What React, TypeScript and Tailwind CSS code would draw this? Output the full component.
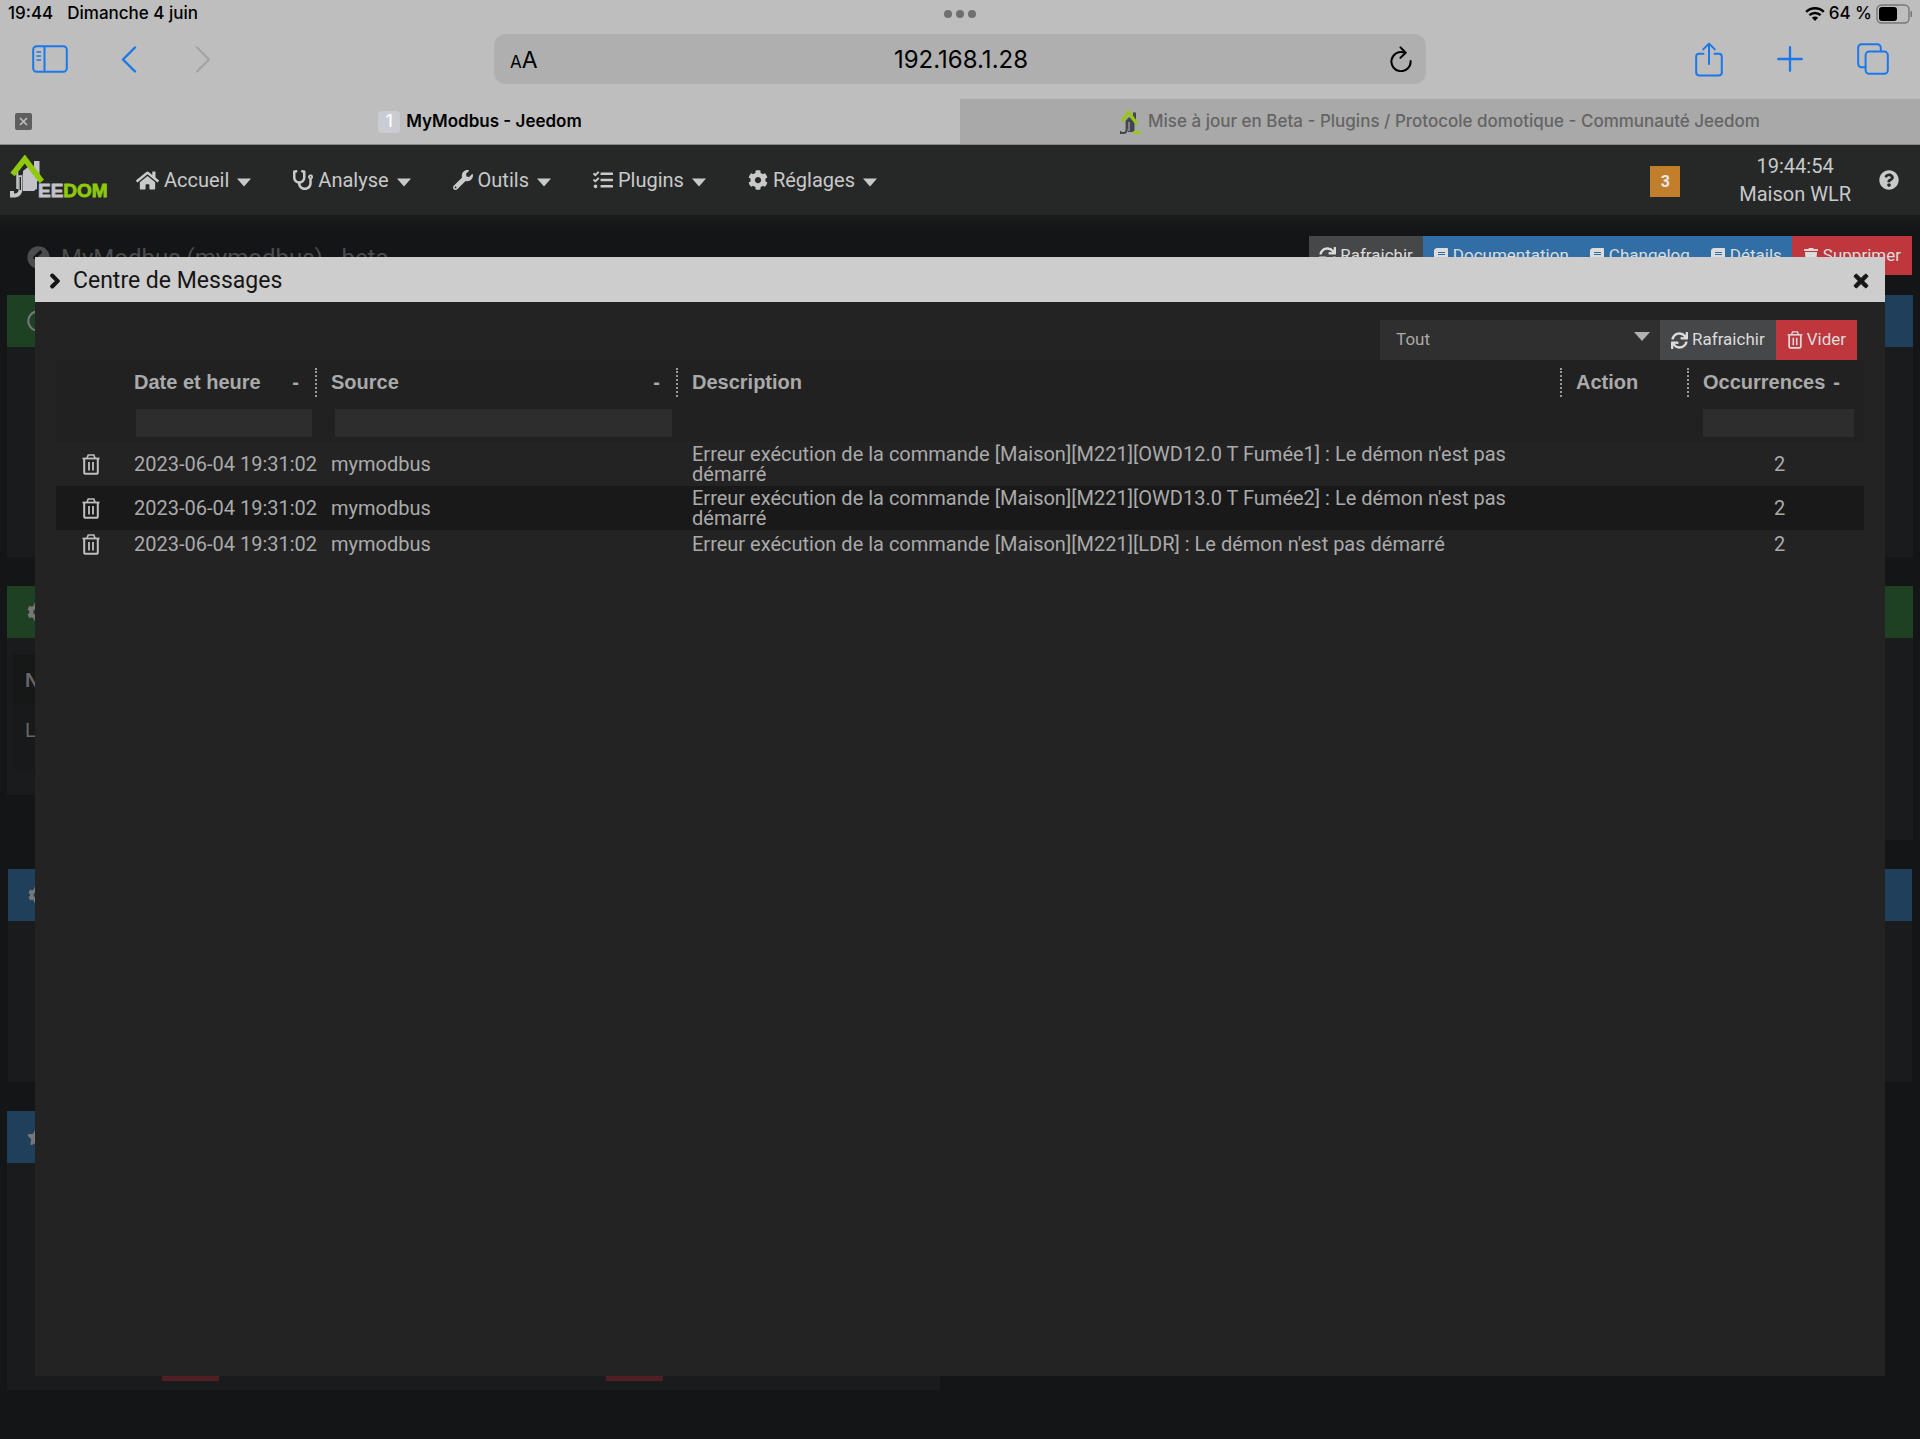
import type { ReactNode } from "react";
import {
  FaBook,
  FaChevronCircleLeft,
  FaChevronRight,
  FaCog,
  FaHome,
  FaQuestionCircle,
  FaRegCircle,
  FaStar,
  FaStethoscope,
  FaSync,
  FaTasks,
  FaTimes,
  FaTrash,
  FaWrench,
} from "react-icons/fa";

const roboto = "font-[Roboto,sans-serif]";
const inter = "font-[Inter,sans-serif]";

function Caret() {
  return (
    <svg width="14" height="9" viewBox="0 0 14 9" aria-hidden="true" className="mt-1">
      <path d="M0 0.5h14L7 8.5z" fill="currentColor" />
    </svg>
  );
}

function TrashOutline({ className }: { className: string }) {
  return (
    <svg viewBox="0 0 18 21" className={className} fill="none" stroke="currentColor" aria-hidden="true">
      <path d="M0.5 4.5h17" strokeWidth="1.8" />
      <path d="M5 4.2L6.2 1h5.6L13 4.2" strokeWidth="1.6" />
      <path d="M2.2 5v13.2a1.6 1.6 0 0 0 1.6 1.6h10.4a1.6 1.6 0 0 0 1.6-1.6V5" strokeWidth="2" />
      <path d="M7 8v8.5M11 8v8.5" strokeWidth="1.8" />
    </svg>
  );
}

function StatusBar() {
  return (
    <div className={`grid h-7 grid-cols-3 items-center text-[17px] font-medium text-black ${inter}`}>
      <div className="flex gap-3.5 pl-2">
        <span>19:44</span>
        <span>Dimanche 4 juin</span>
      </div>
      <div className="flex justify-center gap-1">
        <span className="size-2 rounded-full bg-[#6f6f6f]" />
        <span className="size-2 rounded-full bg-[#6f6f6f]" />
        <span className="size-2 rounded-full bg-[#6f6f6f]" />
      </div>
      <div className="flex items-center justify-end gap-1 pr-2">
        <svg width="20" height="14" viewBox="0 0 20 14" fill="none" stroke="black" aria-hidden="true">
          <path d="M1.2 4.9a12.6 12.6 0 0 1 17.6 0" strokeWidth="2.5" />
          <path d="M4.4 8.2a8 8 0 0 1 11.2 0" strokeWidth="2.5" />
          <path d="M10 14L6.9 10.8a4.4 4.4 0 0 1 6.2 0z" fill="black" stroke="none" />
        </svg>
        <span>64 %</span>
        <svg width="36" height="20" viewBox="0 0 36 20" aria-hidden="true">
          <rect x="1" y="1" width="32" height="18" rx="4.5" fill="none" stroke="#777" strokeWidth="1.4" />
          <rect x="3" y="3" width="18" height="14" rx="3" fill="black" />
          <path d="M34.5 7v6a3 3 0 0 0 0-6z" fill="#777" />
        </svg>
      </div>
    </div>
  );
}

function BrowserBar() {
  return (
    <div className="flex h-[71px] items-start px-7 pt-1.5">
      <div className="flex h-[50px] flex-1 items-center text-[#1a78ea]">
        <button type="button" aria-label="Barre latérale" className="ml-1">
          <svg width="36" height="28" viewBox="0 0 36 28" fill="none" stroke="currentColor" strokeWidth="2">
            <rect x="1.2" y="1.2" width="33.6" height="25.6" rx="3.5" />
            <path d="M12.5 1v26" />
            <path d="M4.5 7h4.5M4.5 11h4.5M4.5 15h4.5" strokeWidth="1.6" />
          </svg>
        </button>
        <button type="button" aria-label="Précédent" className="ml-[53px]">
          <svg width="16" height="27" viewBox="0 0 16 27" fill="none" stroke="currentColor" strokeWidth="2.4" strokeLinecap="round" strokeLinejoin="round">
            <path d="M14 1.5L2 13.5l12 12" />
          </svg>
        </button>
        <button type="button" aria-label="Suivant" className="ml-[58px] text-[#a3a3a3]">
          <svg width="16" height="27" viewBox="0 0 16 27" fill="none" stroke="currentColor" strokeWidth="2.2" strokeLinecap="round" strokeLinejoin="round">
            <path d="M2 1.5l12 12-12 12" />
          </svg>
        </button>
      </div>
      <div className={`grid h-[50px] w-1/2 grid-cols-3 items-center rounded-xl bg-[#afafaf] pr-3.5 pl-4 text-2xl text-black ${inter}`}>
        <button type="button" aria-label="Mise en forme" className="justify-self-start pt-0.5 text-[23px]">
          <span className="text-[17px]">A</span>A
        </button>
        <span className="pt-0.5 text-center">192.168.1.28</span>
        <button type="button" aria-label="Recharger" className="justify-self-end">
          <svg width="22" height="26" viewBox="0 0 22 26" fill="none" stroke="black" strokeWidth="2" strokeLinecap="round" strokeLinejoin="round">
            <path d="M14.4 6.6A9.6 9.6 0 1 0 20.6 15" />
            <path d="M10.5 1.4l5.2 5.4-5.2 5" />
          </svg>
        </button>
      </div>
      <div className="flex h-[50px] flex-1 items-center justify-end text-[#1a78ea]">
        <button type="button" aria-label="Partager">
          <svg width="28" height="35" viewBox="0 0 28 35" fill="none" stroke="currentColor" strokeWidth="2" strokeLinecap="round" strokeLinejoin="round">
            <path d="M8.5 11.8H4a2.8 2.8 0 0 0-2.8 2.8v16A2.8 2.8 0 0 0 4 33.4h20a2.8 2.8 0 0 0 2.8-2.8v-16a2.8 2.8 0 0 0-2.8-2.8h-4.5" />
            <path d="M14 22V1.8M8.2 7.4L14 1.6l5.800 5.800" />
          </svg>
        </button>
        <button type="button" aria-label="Nouvel onglet" className="ml-[54px]">
          <svg width="26" height="26" viewBox="0 0 26 26" fill="none" stroke="currentColor" strokeWidth="2.3" strokeLinecap="round">
            <path d="M13 1.2v23.6M1.2 13h23.6" />
          </svg>
        </button>
        <button type="button" aria-label="Onglets" className="ml-[54px] mr-[3px]">
          <svg width="32" height="32" viewBox="0 0 32 32" fill="none" stroke="currentColor" strokeWidth="2">
            <rect x="8.6" y="8.6" width="22.2" height="22.2" rx="3.5" />
            <path d="M8 24.200H4.600a3.400 3.400 0 0 1-3.400-3.400V4.600a3.400 3.400 0 0 1 3.400-3.400h15.800a3.400 3.400 0 0 1 3.400 3.400V8" />
          </svg>
        </button>
      </div>
    </div>
  );
}

function JeedomMark() {
  return (
    <svg width="22" height="26" viewBox="0 0 22 26" aria-hidden="true">
      <path d="M13 3.500h3v8h-3z" fill="#44464f" />
      <path d="M5.500 12l3.500-4 5.500 5v10H8z" fill="#44464f" />
      <path d="M6.500 13v8a3 3 0 0 1-3 3H0.500v-2" fill="none" stroke="#44464f" strokeWidth="1.800" />
      <path d="M9 13v9" stroke="#a9a9a9" strokeWidth="1.200" />
      <path d="M2 12.500L8.500 3l8.500 12" fill="none" stroke="#9ac51b" strokeWidth="3.200" />
      <path d="M13 23.500h8" stroke="#9ac51b" strokeWidth="3" />
    </svg>
  );
}

function BrowserTabs() {
  return (
    <div className={`grid h-[46px] grid-cols-2 border-b border-[#8a8a8a] text-[17px] ${inter}`}>
      <div className="flex items-center pl-[15px] font-semibold text-black">
        <button type="button" aria-label="Fermer l'onglet" className="flex size-[17px] items-center justify-center rounded-xs bg-[#5e5e5e] text-[#bebebe]">
          <svg width="9" height="9" viewBox="0 0 9 9" stroke="currentColor" strokeWidth="1.6" aria-hidden="true">
            <path d="M1 1l7 7M8 1L1 8" />
          </svg>
        </button>
        <div className="flex flex-1 items-center justify-center gap-1.5 pr-8">
          <span className="flex size-[22px] items-center justify-center rounded-sm bg-[#cbcbd3] font-medium text-white">1</span>
          <span>MyModbus - Jeedom</span>
        </div>
      </div>
      <div className="flex items-center justify-center gap-1.5 bg-[#a9a9a9] font-medium text-[#646464]">
        <JeedomMark />
        <span>Mise à jour en Beta - Plugins / Protocole domotique - Communauté Jeedom</span>
      </div>
    </div>
  );
}

function Logo() {
  return (
    <svg width="100" height="50" viewBox="0 0 100 50" role="img" aria-label="Jeedom">
      <path d="M25 6h5.500v20H25z" fill="#c3c3c8" />
      <path d="M14 16l5-4 6 8 3 2v12a5 5 0 0 0-3 2H14z" fill="#c3c3c8" />
      <path d="M8.500 17v17" stroke="#c3c3c8" strokeWidth="2.500" />
      <path d="M11.500 19v15.500a6 6 0 0 1-5.500 6H3V36" fill="none" stroke="#c3c3c8" strokeWidth="4" />
      <path d="M10 17h2.500v2.500H10zM11.300 22v13" stroke="#262828" strokeWidth="1.400" fill="#262828" />
      <path d="M3.500 19.500L15.800 4l17 22.500" fill="none" stroke="#8fc90c" strokeWidth="5.500" />
      <text x="29" y="42" fontFamily="Liberation Sans, sans-serif" fontWeight="bold" fontSize="19" fill="#c3c3c8" stroke="#c3c3c8" strokeWidth="0.8">
        EE
        <tspan fill="#8fc90c" stroke="#8fc90c">DOM</tspan>
      </text>
    </svg>
  );
}

function NavItem({ icon, label }: { icon: ReactNode; label: string }) {
  return (
    <button type="button" className="flex items-center">
      <span className="mr-[5px] text-xl">{icon}</span>
      <span className="mr-2">{label}</span>
      <Caret />
    </button>
  );
}

function NavBar() {
  return (
    <header className={`flex h-[70px] items-center bg-[#262828] pr-[21px] pl-[9px] text-xl text-[#c9c9c9] ${roboto}`}>
      <a href="#accueil">
        <Logo />
      </a>
      <nav className="ml-[27px] flex flex-1 items-center gap-[42px]">
        <NavItem icon={<FaHome className="size-[23px]" />} label="Accueil" />
        <NavItem icon={<FaStethoscope />} label="Analyse" />
        <NavItem icon={<FaWrench />} label="Outils" />
        <NavItem icon={<FaTasks />} label="Plugins" />
        <NavItem icon={<FaCog />} label="Réglages" />
      </nav>
      <button type="button" className="mt-0.5 flex h-[31px] w-[30px] items-center justify-center bg-[#c27f2b] pt-0.5 text-base font-bold text-[#e8e8e8]">
        3
      </button>
      <div className="ml-[59px] text-center leading-7">
        <div>19:44:54</div>
        <div>Maison WLR</div>
      </div>
      <button type="button" aria-label="Aide" className="ml-7">
        <FaQuestionCircle className="size-5" />
      </button>
    </header>
  );
}

function ActionButton({ icon, label, className }: { icon: ReactNode; label: string; className: string }) {
  return (
    <button type="button" className={`flex items-center justify-center gap-1 text-[17px] text-[#dcdcdc] ${className}`}>
      {icon}
      {label}
    </button>
  );
}

function Panel({ header, icon, className, children }: { header: string; icon?: ReactNode; className: string; children?: ReactNode }) {
  return (
    <section className={`flex flex-col bg-[#1a1b1c] ${className}`}>
      <div className={`flex h-[52px] shrink-0 items-center pl-5 text-[#777] ${header}`}>{icon}</div>
      {children}
    </section>
  );
}

function PluginPage() {
  return (
    <div className="px-[7px] pb-[49px]">
      <div className="flex justify-between pt-[21px] pr-px">
        <h1 className="flex items-center gap-[11px] pt-1 pl-5 text-2xl leading-none text-[#4b4c4d]">
          <FaChevronCircleLeft className="size-[23px]" />
          MyModbus (mymodbus) - beta
        </h1>
        <div className="flex h-[39px]">
          <ActionButton className="bg-[#464749] px-2.5" icon={<FaSync className="size-[17px]" />} label="Rafraichir" />
          <ActionButton className="bg-[#306ea5] px-2.5" icon={<FaBook className="size-4" />} label="Documentation" />
          <ActionButton className="bg-[#306ea5] px-2.5" icon={<FaBook className="size-4" />} label="Changelog" />
          <ActionButton className="bg-[#306ea5] px-2.5" icon={<FaBook className="size-4" />} label="Détails" />
          <ActionButton className="bg-[#be373c] px-[11px]" icon={<FaTrash className="size-4" />} label="Supprimer" />
        </div>
      </div>
      <div className="mt-5 grid grid-cols-2 items-start gap-x-10 gap-y-[29px]">
        <Panel className="h-[262px]" header="bg-[#1e4023]" icon={<FaRegCircle className="size-[22px]" />} />
        <Panel className="h-[262px]" header="bg-[#1f3f5a]" />
        <Panel className="h-[209px]" header="bg-[#1e4023]" icon={<FaCog className="size-[18px]" />}>
          <div className="mx-1.5 mt-4 mb-6 flex-1 bg-[#18191a] font-['Liberation_Sans',sans-serif] text-xl text-[#666]">
            <div className="h-[50px] bg-[#161717] pl-3 leading-[52px] font-bold">N</div>
            <div className="pl-3 leading-[52px]">L</div>
          </div>
        </Panel>
        <Panel className="h-[254px]" header="bg-[#1e4023]" />
        <Panel className="col-span-2 mx-px h-[213px]" header="bg-[#1f3f5a]" icon={<FaCog className="size-4" />} />
        <Panel className="h-[279px]" header="bg-[#1f3f5a]" icon={<FaStar className="size-[18px]" />}>
          <div className="mb-[9px] grid flex-1 grid-cols-[444px_1fr] items-end pl-[155px]">
            <div className="h-10 w-[57px] bg-[#4f1f24]" />
            <div className="h-10 w-[57px] bg-[#4f1f24]" />
          </div>
        </Panel>
      </div>
    </div>
  );
}

const rows = [
  { date: "2023-06-04 19:31:02", source: "mymodbus", text: "Erreur exécution de la commande [Maison][M221][OWD12.0 T Fumée1] : Le démon n'est pas démarré", count: 2 },
  { date: "2023-06-04 19:31:02", source: "mymodbus", text: "Erreur exécution de la commande [Maison][M221][OWD13.0 T Fumée2] : Le démon n'est pas démarré", count: 2 },
  { date: "2023-06-04 19:31:02", source: "mymodbus", text: "Erreur exécution de la commande [Maison][M221][LDR] : Le démon n'est pas démarré", count: 2 },
];

type HeadCellProps = { label: string; head?: string; sortable?: boolean; filter?: string };

function HeadCell({ label, head = "border-l-2 pr-4", sortable, filter }: HeadCellProps) {
  return (
    <th scope="col" className="p-0 text-left align-top">
      <div className={`mt-2 flex h-[29px] items-center justify-between border-dotted border-[#9a9a9a] pb-0.5 pl-3.5 ${head}`}>
        <span>{label}</span>
        {sortable && <span>-</span>}
      </div>
      {filter && (
        <div className={`pt-3 ${filter}`}>
          <input aria-label={`Filtrer ${label}`} className="block h-7 w-full bg-[#2d2d2d] px-2 text-base font-normal outline-none" />
        </div>
      )}
    </th>
  );
}

function MessageTable() {
  return (
    <table className="w-full table-fixed border-collapse text-xl leading-5 text-[#aaa]">
      <colgroup>
        <col className="w-16" />
        <col className="w-[195px]" />
        <col className="w-[361px]" />
        <col />
        <col className="w-[127px]" />
        <col className="w-[177px]" />
      </colgroup>
      <thead className="h-[82px] bg-[#212121] font-['Liberation_Sans',sans-serif]">
        <tr>
          <td />
          <HeadCell label="Date et heure" sortable head="pr-4" filter="pr-[3px] pl-4" />
          <HeadCell label="Source" sortable filter="pr-1 pl-5" />
          <HeadCell label="Description" />
          <HeadCell label="Action" />
          <HeadCell label="Occurrences" sortable head="border-l-2 pr-6" filter="pr-2.5 pl-4" />
        </tr>
      </thead>
      <tbody>
        {rows.map((row) => (
          <tr key={row.text} className="h-7 even:bg-[#191919]">
            <td className="py-0.5 pl-[26px]">
              <button type="button" aria-label="Supprimer le message" className="block text-[#c0c0c0]">
                <TrashOutline className="h-[21px] w-[18px]" />
              </button>
            </td>
            <td className="py-0.5 pl-3.5 whitespace-nowrap">{row.date}</td>
            <td className="py-0.5 pl-4">{row.source}</td>
            <td className="py-0.5 pr-3.5 pl-4">{row.text}</td>
            <td />
            <td className="py-0.5 pl-2 text-center">{row.count}</td>
          </tr>
        ))}
      </tbody>
    </table>
  );
}

function MessageDialog() {
  return (
    <div role="dialog" aria-labelledby="dialog-title" className="absolute inset-x-[35px] top-[42px] bottom-[63px] bg-[#232323]">
      <div className="flex h-[45px] items-center bg-[#cdcdcd] pt-0.5 pr-3.5 pl-3 text-[#151515]">
        <FaChevronRight className="size-4 stroke-current stroke-[50]" />
        <h2 id="dialog-title" className="ml-2.5 flex-1 pt-0.5 text-[23px]">
          Centre de Messages
        </h2>
        <button type="button" aria-label="Fermer">
          <FaTimes className="size-5 stroke-current stroke-[24]" />
        </button>
      </div>
      <div className="px-[21px] pt-[18px]">
        <div className="mr-[7px] flex h-10 justify-end">
          <div className="relative w-[280px]">
            <select aria-label="Type de message" className="h-full w-full appearance-none bg-[#2f2f2f] pl-4 text-[17px] text-[#aaa] outline-none">
              <option>Tout</option>
            </select>
            <svg width="16" height="9" viewBox="0 0 16 9" className="pointer-events-none absolute top-3 right-2.5 text-[#b0b0b0]" aria-hidden="true">
              <path d="M0 0h16L8 9z" fill="currentColor" />
            </svg>
          </div>
          <ActionButton className="bg-[#464749] px-[11px]" icon={<FaSync className="size-[17px]" />} label="Rafraichir" />
          <ActionButton className="bg-[#be373c] px-[11px]" icon={<TrashOutline className="h-[18px] w-4" />} label="Vider" />
        </div>
        <MessageTable />
      </div>
    </div>
  );
}

export default function App() {
  return (
    <div className={`flex min-h-screen flex-col bg-[#131516] ${roboto}`}>
      <div className="bg-[#bebebe]">
        <StatusBar />
        <BrowserBar />
        <BrowserTabs />
      </div>
      <NavBar />
      <main className="relative flex-1 bg-linear-to-b from-[#1a1b1b] to-[#131516] to-[15px]">
        <PluginPage />
        <MessageDialog />
      </main>
    </div>
  );
}
